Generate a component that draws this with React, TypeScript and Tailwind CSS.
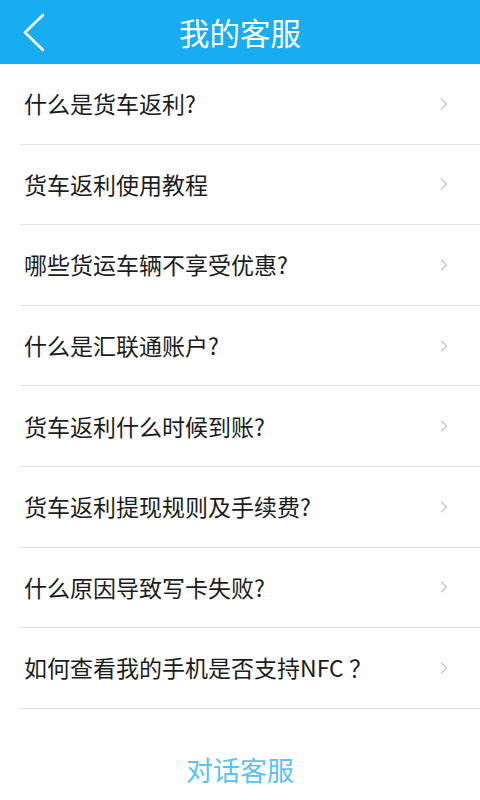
import { ChevronRight } from "lucide-react";

const questions = [
  "什么是货车返利?",
  "货车返利使用教程",
  "哪些货运车辆不享受优惠?",
  "什么是汇联通账户?",
  "货车返利什么时候到账?",
  "货车返利提现规则及手续费?",
  "什么原因导致写卡失败?",
  "如何查看我的手机是否支持NFC ？",
];

const font = { fontFamily: '"Noto Sans CJK SC", "Noto Sans", sans-serif' };

export default function App() {
  return (
    <div className="w-[480px] h-[800px] bg-white flex flex-col overflow-hidden" style={font}>
      {/* header */}
      <div className="h-[64px] bg-[#18acf0] relative flex items-center justify-center shrink-0">
        <svg className="absolute left-[20px] top-[12px]" width="30" height="40" viewBox="0 0 30 40">
          <path d="M23 3 L5 20.5 L23 38" fill="none" stroke="#fff" strokeWidth="2.6" strokeLinecap="round" strokeLinejoin="round" />
        </svg>
        <span className="text-white text-[30.5px] leading-none">我的客服</span>
      </div>

      {/* list */}
      <div className="flex flex-col">
        {questions.map((q) => (
          <div key={q} className="h-[80.6px] ml-5 border-b border-[#e4e4e4] flex items-center justify-between pr-[26px]">
            <span className="pl-1 text-[23px] text-[#1c1c1c] leading-none">{q}</span>
            <ChevronRight size={20} strokeWidth={1.4} className="text-[#c4c4c4]" />
          </div>
        ))}
      </div>

      {/* bottom */}
      <div className="flex-1 flex items-center justify-center pt-[30px]">
        <span className="text-[27px] text-[#5ec2ee] leading-none">对话客服</span>
      </div>
    </div>
  );
}
